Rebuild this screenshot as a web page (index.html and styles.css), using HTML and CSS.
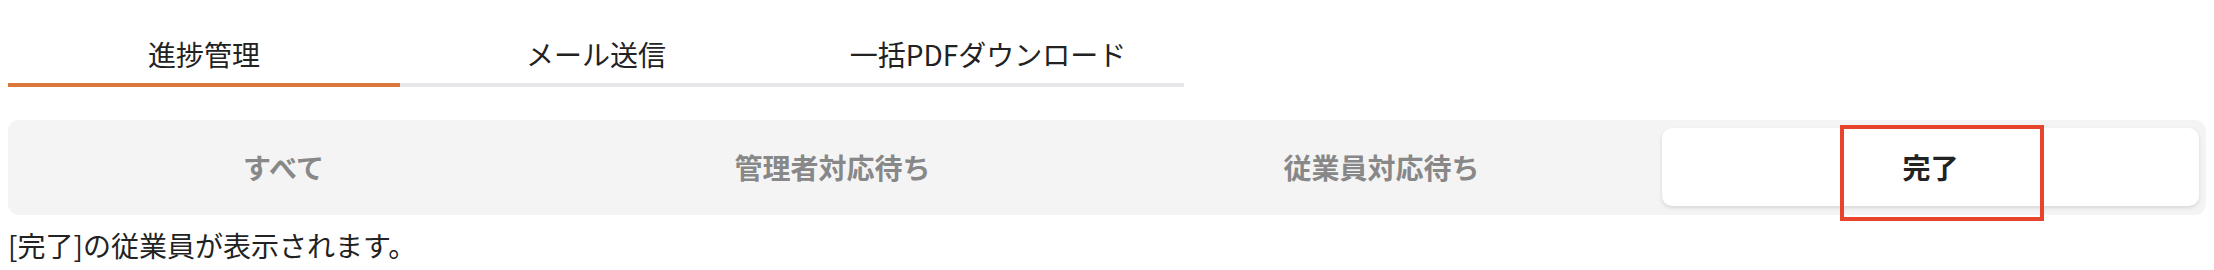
FILE: index.html
```html
<!DOCTYPE html>
<html lang="ja">
<head>
<meta charset="utf-8">
<title>進捗管理</title>
<link rel="stylesheet" href="styles.css">
</head>
<body>
<div class="page">
  <nav class="tabs">
    <div class="tab active">進捗管理</div>
    <div class="tab">メール送信</div>
    <div class="tab">一括PDFダウンロード</div>
  </nav>
  <div class="segmented">
    <div class="seg">すべて</div>
    <div class="seg">管理者対応待ち</div>
    <div class="seg">従業員対応待ち</div>
    <div class="seg selected">完了<span class="highlight"></span></div>
  </div>
  <p class="desc">[完了]の従業員が表示されます。</p>
</div>
</body>
</html>
```
FILE: styles.css
```css
html, body {
  margin: 0;
  padding: 0;
  background: #ffffff;
}
body {
  font-family: "Noto Sans CJK JP", "Noto Sans", sans-serif;
  color: #222222;
}
.page {
  padding: 0 8px;
}
.tabs {
  display: grid;
  grid-template-columns: repeat(3, 392px);
}
.tab {
  padding-top: 36px;
  padding-bottom: 11px;
  line-height: 36px;
  font-size: 28px;
  text-align: center;
  border-bottom: 4px solid #e6e6ea;
  color: #222222;
}
.tab.active {
  border-bottom-color: #d97a3a;
}
.segmented {
  margin-top: 33px;
  height: 95px;
  box-sizing: border-box;
  padding: 8px 7px 9px;
  background: #f4f4f4;
  border-radius: 11px;
  display: grid;
  grid-template-columns: repeat(4, 1fr);
  column-gap: 12px;
}
.seg {
  position: relative;
  display: flex;
  align-items: center;
  justify-content: center;
  font-size: 28px;
  font-weight: 700;
  color: #888888;
  border-radius: 10px;
}
.seg.selected {
  background: #ffffff;
  color: #222222;
  box-shadow: 0 2px 4px rgba(0, 0, 0, 0.12);
}
.highlight {
  position: absolute;
  left: 178px;
  top: -3px;
  width: 204px;
  height: 96px;
  box-sizing: border-box;
  border: 4px solid #e8432b;
}
.desc {
  margin: 12px 0 0;
  font-size: 28px;
  line-height: 36px;
  color: #222222;
}
```
